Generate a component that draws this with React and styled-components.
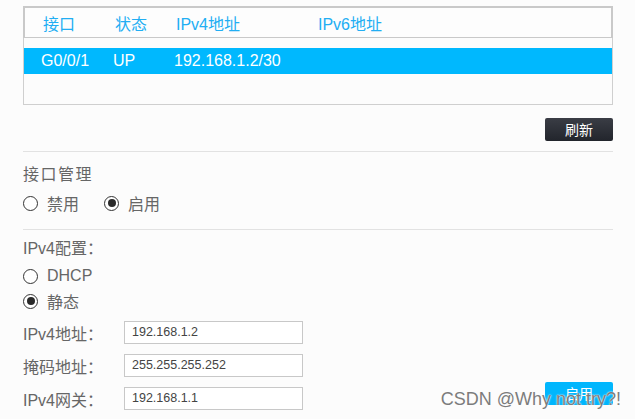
import React from "react";
import styled, { createGlobalStyle } from "styled-components";

const Global = createGlobalStyle`
  html, body {
    margin: 0;
    padding: 0;
    background: #fcfcfc;
  }
  body {
    font-family: "Liberation Sans", "Noto Sans CJK SC", sans-serif;
  }
`;

const Page = styled.div`
  position: relative;
  width: 635px;
  height: 419px;
  overflow: hidden;
  padding: 6px 22px 0 23px;
  box-sizing: border-box;
`;

const Table = styled.div`
  height: 99px;
  border: 1px solid #cfcfcf;
  border-top: none;
  box-sizing: border-box;
`;

const HeadRow = styled.div`
  display: grid;
  grid-template-columns: 72px 61px 142px 1fr;
  align-items: center;
  height: 32px;
  margin: 0 -1px;
  padding-left: 18px;
  border: 2px solid #c9c9c9;
  border-bottom: 1px solid #c9c9c9;
  box-sizing: border-box;
  background: #fdfdfd;
  color: #22aef3;
  font-size: 16px;
`;

const BodyRow = styled.div`
  display: grid;
  grid-template-columns: 72px 61px 142px 1fr;
  align-items: center;
  height: 26px;
  margin-top: 10px;
  padding-left: 17px;
  background: ${(p) => (p.selected ? "#00b8fe" : "transparent")};
  color: ${(p) => (p.selected ? "#ffffff" : "#333")};
  font-size: 16px;
`;

const ButtonBar = styled.div`
  display: flex;
  justify-content: flex-end;
  margin-top: 13px;
`;

const Button = styled.button`
  width: 68px;
  height: 23px;
  padding: 0;
  border: none;
  border-radius: 2px;
  font-family: "Noto Sans CJK SC", sans-serif;
  font-size: 14px;
  line-height: 23px;
  color: #fff;
  background: ${(p) =>
    p.primary ? "#00b6fd" : "linear-gradient(#3a3d45, #22252c)"};
`;

const Divider = styled.div`
  height: 1px;
  background: #e2e2e2;
  margin: ${(p) => p.m || "10px 0 0"};
`;

const Title = styled.div`
  margin-top: ${(p) => p.mt || 11}px;
  font-size: 16px;
  line-height: 24px;
  letter-spacing: ${(p) => p.ls || 0}px;
  color: #666;
`;

const RadioRow = styled.div`
  display: flex;
  gap: ${(p) => p.gap || 25}px;
  height: 24px;
  margin-top: ${(p) => p.mt || 0}px;
`;

const RadioOption = styled.label`
  display: flex;
  align-items: center;
  gap: 9px;
  font-size: 16px;
  color: #666;
`;

const Circle = styled.span`
  position: relative;
  width: 15px;
  height: 15px;
  border: 1px solid #333;
  border-radius: 50%;
  background: #fff;
  box-sizing: border-box;
  &::after {
    content: "";
    display: ${(p) => (p.checked ? "block" : "none")};
    position: absolute;
    left: 2.5px;
    top: 2.5px;
    width: 8px;
    height: 8px;
    border-radius: 50%;
    background: #2a2a2a;
  }
`;

const Bottom = styled.div`
  display: flex;
  justify-content: space-between;
  align-items: flex-end;
  margin-top: 8px;
`;

const Form = styled.div`
  display: flex;
  flex-direction: column;
  gap: 10px;
`;

const Field = styled.div`
  display: flex;
  align-items: center;
  height: 23px;
`;

const FieldLabel = styled.span`
  width: 101px;
  font-size: 16px;
  color: #666;
`;

const Input = styled.div`
  width: 179px;
  height: 23px;
  border: 1px solid #c8c8c8;
  background: #fff;
  box-sizing: border-box;
  padding-left: 7px;
  font-size: 12.5px;
  line-height: 21px;
  color: #444;
`;

const ApplyWrap = styled.div`
  margin-bottom: 5px;
`;

const Watermark = styled.div`
  position: absolute;
  right: 14px;
  bottom: 9px;
  font-size: 18px;
  color: #7c7c7c;
  text-shadow: 0 0 2px #fff, 0 0 1px #fff;
  white-space: nowrap;
`;

const Radio = ({ checked, children }) => (
  <RadioOption>
    <Circle checked={checked} />
    {children}
  </RadioOption>
);

export default function App() {
  const fields = [
    ["IPv4地址：", "192.168.1.2"],
    ["掩码地址：", "255.255.255.252"],
    ["IPv4网关：", "192.168.1.1"],
  ];
  return (
    <>
      <Global />
      <Page>
        <Table>
          <HeadRow>
            <span>接口</span>
            <span>状态</span>
            <span>IPv4地址</span>
            <span>IPv6地址</span>
          </HeadRow>
          <BodyRow selected>
            <span>G0/0/1</span>
            <span>UP</span>
            <span>192.168.1.2/30</span>
            <span></span>
          </BodyRow>
        </Table>
        <ButtonBar>
          <Button>刷新</Button>
        </ButtonBar>
        <Divider />
        <Title ls={1.5}>接口管理</Title>
        <RadioRow mt={4}>
          <Radio>禁用</Radio>
          <Radio checked>启用</Radio>
        </RadioRow>
        <Divider m="14px 0 0" />
        <Title mt={7}>IPv4配置：</Title>
        <RadioRow mt={3}>
          <Radio>DHCP</Radio>
        </RadioRow>
        <RadioRow mt={1}>
          <Radio checked>静态</Radio>
        </RadioRow>
        <Bottom>
          <Form>
            {fields.map(([label, value]) => (
              <Field key={label}>
                <FieldLabel>{label}</FieldLabel>
                <Input>{value}</Input>
              </Field>
            ))}
          </Form>
          <ApplyWrap>
            <Button primary>启用</Button>
          </ApplyWrap>
        </Bottom>
        <Watermark>CSDN @Why not try?!</Watermark>
      </Page>
    </>
  );
}
